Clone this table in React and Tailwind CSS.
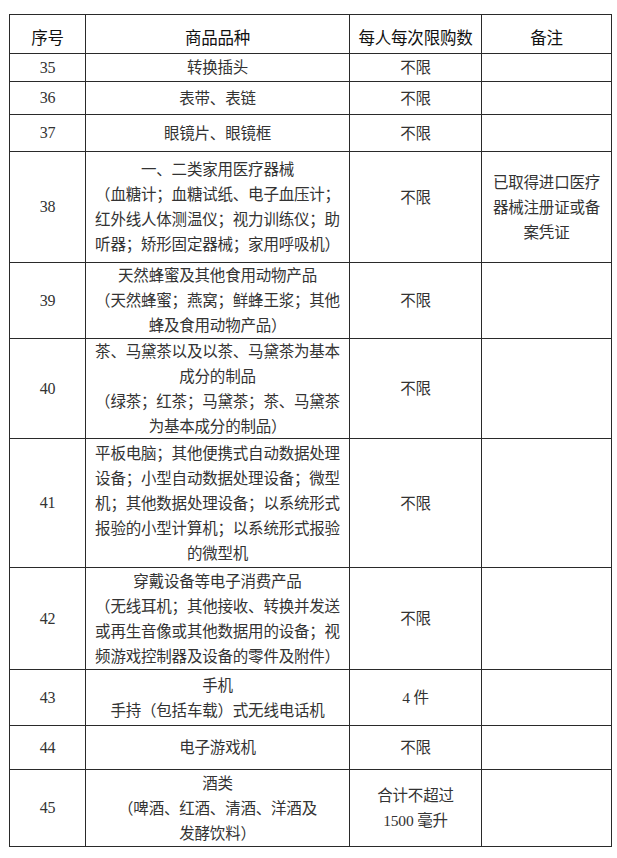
import React from "react";

const rows = [
  { no: "35", h: "h-[28px]", name: ["转换插头"], limit: ["不限"] },
  { no: "36", h: "h-[33px]", name: ["表带、表链"], limit: ["不限"] },
  { no: "37", h: "h-[37px]", name: ["眼镜片、眼镜框"], limit: ["不限"] },
  {
    no: "38",
    h: "h-[111px]",
    name: [
      "一、二类家用医疗器械",
      "（血糖计；血糖试纸、电子血压计；",
      "红外线人体测温仪；视力训练仪；助",
      "听器；矫形固定器械；家用呼吸机）",
    ],
    limit: ["不限"],
    limitCls: "pb-[20px]",
    note: ["已取得进口医疗", "器械注册证或备", "案凭证"],
  },
  {
    no: "39",
    h: "h-[76px]",
    name: ["天然蜂蜜及其他食用动物产品", "（天然蜂蜜；燕窝；鲜蜂王浆；其他", "蜂及食用动物产品）"],
    limit: ["不限"],
  },
  {
    no: "40",
    h: "h-[100px]",
    name: ["茶、马黛茶以及以茶、马黛茶为基本", "成分的制品", "（绿茶；红茶；马黛茶；茶、马黛茶", "为基本成分的制品）"],
    limit: ["不限"],
  },
  {
    no: "41",
    h: "h-[129px]",
    name: [
      "平板电脑；其他便携式自动数据处理",
      "设备；小型自动数据处理设备；微型",
      "机；其他数据处理设备；以系统形式",
      "报验的小型计算机；以系统形式报验",
      "的微型机",
    ],
    limit: ["不限"],
  },
  {
    no: "42",
    h: "h-[102px]",
    name: [
      "穿戴设备等电子消费产品",
      "（无线耳机；其他接收、转换并发送",
      "或再生音像或其他数据用的设备；视",
      "频游戏控制器及设备的零件及附件）",
    ],
    limit: ["不限"],
  },
  { no: "43", h: "h-[56px]", name: ["手机", "手持（包括车载）式无线电话机"], limit: ["4 件"] },
  { no: "44", h: "h-[44px]", name: ["电子游戏机"], limit: ["不限"] },
  {
    no: "45",
    h: "h-[77px]",
    name: ["酒类", "（啤酒、红酒、清酒、洋酒及", "发酵饮料）"],
    limit: ["合计不超过", "1500 毫升"],
  },
];

const cell = "border-r border-b border-[#2a2a2a] flex flex-col items-center justify-center text-center";
const head = `${cell} h-[39px] text-[16.5px] text-[#111] font-normal pt-[6px]`;
const headFont = { fontFamily: '"Noto Sans CJK SC", sans-serif' };

function Lines({ lines }) {
  return (
    <>
      {lines.map((l, i) => (
        <span key={i} className="block whitespace-nowrap leading-[25px]">
          {l}
        </span>
      ))}
    </>
  );
}

export default function App() {
  return (
    <div
      className="bg-white w-[617px] h-[858px] pt-[14px] pl-[9px] text-[#333]"
      style={{ fontFamily: '"Liberation Serif", "Noto Sans CJK SC", serif' }}
    >
      <div className="w-[603px] border-t border-l border-[#2a2a2a] grid grid-cols-[76px_264px_132px_130px] text-[15.5px] tracking-[-0.2px]">
        <div className={head} style={headFont}>序号</div>
        <div className={head} style={headFont}>商品品种</div>
        <div className={head} style={headFont}>每人每次限购数</div>
        <div className={head} style={headFont}>备注</div>
        {rows.map((r) => (
          <React.Fragment key={r.no}>
            <div className={`${cell} ${r.h} text-[16px]`}>{r.no}</div>
            <div className={`${cell} ${r.h}`}>
              <Lines lines={r.name} />
            </div>
            <div className={`${cell} ${r.h} ${r.limitCls || ""}`}>
              <Lines lines={r.limit} />
            </div>
            <div className={`${cell} ${r.h}`}>{r.note ? <Lines lines={r.note} /> : null}</div>
          </React.Fragment>
        ))}
      </div>
    </div>
  );
}
